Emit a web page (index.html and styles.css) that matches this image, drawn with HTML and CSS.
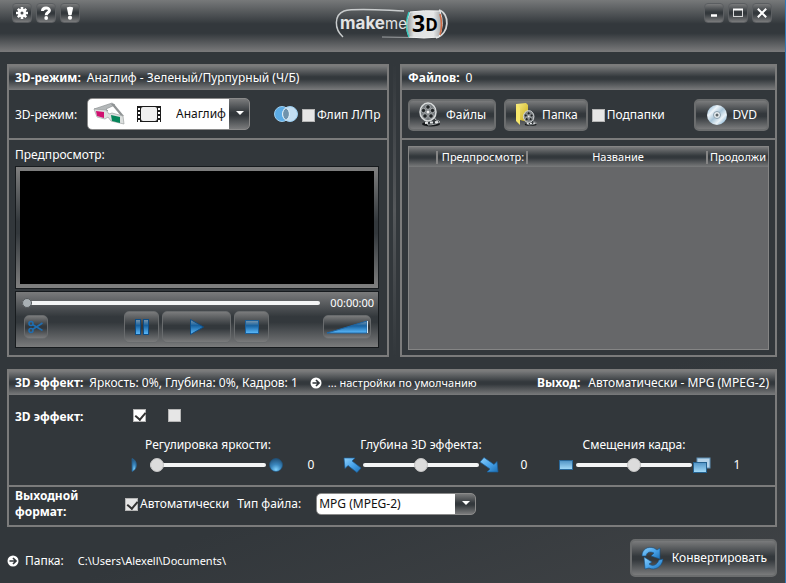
FILE: index.html
```html
<!DOCTYPE html>
<html lang="ru">
<head>
<meta charset="utf-8">
<meta name="viewport" content="width=device-width, initial-scale=1">
<title>makeme3D</title>
<link rel="stylesheet" href="styles.css">
</head>
<body>
<svg class="defs" aria-hidden="true">
  <defs>
    <linearGradient id="blue" x1="0" y1="0" x2="0" y2="1"><stop offset="0" stop-color="#7d99ae"/><stop offset=".4" stop-color="#17619f"/><stop offset="1" stop-color="#5cbcff"/></linearGradient>
    <linearGradient id="sky" x1="0" y1="0" x2="1" y2="1"><stop offset="0" stop-color="#8fd0fa"/><stop offset=".5" stop-color="#4aa5ec"/><stop offset="1" stop-color="#1d6fb4"/></linearGradient>
    <linearGradient id="frame" x1="0" y1="0" x2="0" y2="1"><stop offset="0" stop-color="#4f92c4"/><stop offset="1" stop-color="#a5dcfa"/></linearGradient>
    <radialGradient id="orb" cx=".5" cy=".85" r=".8"><stop offset="0" stop-color="#7fd0fb"/><stop offset=".5" stop-color="#3a86bd"/><stop offset="1" stop-color="#24567e"/></radialGradient>
    <linearGradient id="disc" x1="0" y1="0" x2="1" y2="1"><stop offset="0" stop-color="#6fa4c8"/><stop offset=".3" stop-color="#eef5fa"/><stop offset=".5" stop-color="#a9c5d8"/><stop offset=".7" stop-color="#eaf2f7"/><stop offset="1" stop-color="#5b9ac6"/></linearGradient>
    <linearGradient id="folder" x1="0" y1="0" x2="1" y2="1"><stop offset="0" stop-color="#fbf08a"/><stop offset="1" stop-color="#c7a915"/></linearGradient>
    <linearGradient id="badge" x1="0" y1="0" x2="1" y2="0"><stop offset="0" stop-color="#8b9092"/><stop offset=".2" stop-color="#dfe1e1"/><stop offset=".75" stop-color="#e6e7e7"/><stop offset="1" stop-color="#9a9d9e"/></linearGradient>
    <symbol id="reel" viewBox="0 0 24 26">
      <ellipse cx="13" cy="22" rx="9" ry="2.500" fill="#15181a"/>
      <path d="M15 5c4 3 1 9 2 12 1 2 4 1 5 3-3 2-8 3-12 3l-2-4z" fill="#33383b" stroke="#a8acae"/>
      <path d="M7 21l13-1" stroke="#e4e6e7" stroke-width="2" stroke-dasharray="3 2"/>
      <ellipse cx="10" cy="10" rx="8" ry="9" fill="#777c7f" stroke="#d8dbdc" stroke-width="1.500"/>
      <g fill="#202426" stroke="#b9bdbf" stroke-width=".8"><circle cx="10" cy="5" r="2.300"/><circle cx="5.500" cy="8.500" r="2.200"/><circle cx="14.500" cy="8.500" r="2.200"/><circle cx="7" cy="14" r="2.300"/><circle cx="13" cy="14" r="2.300"/></g>
      <circle cx="10" cy="10" r="1.500" fill="#eee"/>
    </symbol>
    <symbol id="go" viewBox="0 0 12 12"><circle cx="6" cy="6" r="5.500" fill="#fff"/><path d="M2.500 6h6M6 3l3 3-3 3" fill="none" stroke="#33383c" stroke-width="1.700"/></symbol>
    <symbol id="arrow" viewBox="0 0 20 16"><path d="M1 1l11 0-3 3 9 7-4 4.500-9-7-3 3z" fill="url(#sky)" stroke="#1b5f99" stroke-width=".7"/></symbol>
  </defs>
</svg>

<div class="window">
  <header class="titlebar">
    <div class="tools">
      <button class="mini" aria-label="Настройки"><svg width="14" height="14" viewBox="0 0 14 14"><g stroke="#fff" stroke-width="2.600"><path d="M7 1v12M1 7h12M2.800 2.800l8.400 8.400M11.200 2.800l-8.400 8.400"/></g><circle cx="7" cy="7" r="4.200" fill="#fff"/><circle cx="7" cy="7" r="1.500" fill="#4b4f52"/></svg></button>
      <button class="mini" aria-label="Справка"><svg width="14" height="14" viewBox="0 0 14 14"><path d="M3.500 5C3.500 .8 10.700 1 10.400 4.700 10.200 6.700 7.200 6.600 7.200 9.200" fill="none" stroke="#fff" stroke-width="3"/><circle cx="7.200" cy="12" r="1.900" fill="#fff"/></svg></button>
      <button class="mini" aria-label="О программе"><svg width="14" height="14" viewBox="0 0 14 14"><path d="M3.800 1.500Q7 -.2 10.200 1.500L8.600 9H5.400z" fill="#fff"/><circle cx="7" cy="11.700" r="2.100" fill="#fff"/></svg></button>
    </div>
    <svg class="logo" width="116" height="36" viewBox="0 0 116 36" role="img" aria-label="makeme3D">
      <path d="M70 5C45 4 20 2 10 5 0 9 0 23 9 31" fill="none" stroke="#c9cccd" stroke-width="1.500"/>
      <path d="M48 31l32 .5" stroke="#9fa2a4"/>
      <path d="M105 4c11 3 11 24-3 28" fill="none" stroke="#d4d6d7" stroke-width="1.800"/>
      <path d="M76 6q14-2 30-1 5 14-1 26-15 2-30 0-5-12 1-25z" fill="url(#badge)" stroke="#f2f3f3"/>
      <path d="M75 6q-5 13 0 25" fill="none" stroke="#35c8bd" stroke-width="1.500"/>
      <path d="M106 8q3 11 0 21" fill="none" stroke="#cf6b45" stroke-width="1.600"/>
      <text class="logo-make" x="6" y="23">make</text>
      <text class="logo-me" x="51" y="23">me</text>
      <text class="logo-3" x="78" y="26">3<tspan class="logo-d" dy="-1">D</tspan></text>
    </svg>
    <div class="tools end">
      <button class="mini" aria-label="Свернуть"><svg width="14" height="14" viewBox="0 0 14 14"><path d="M4 9.500h6" stroke="#fff" stroke-width="2.500"/></svg></button>
      <button class="mini" aria-label="Развернуть"><svg width="14" height="14" viewBox="0 0 14 14"><rect x="2.500" y="3.500" width="9" height="7" fill="none" stroke="#d5d6d7"/><path d="M2 3.500h10" stroke="#fff" stroke-width="2"/></svg></button>
      <button class="mini" aria-label="Закрыть"><svg width="14" height="14" viewBox="0 0 14 14"><path d="M2.800 2.800l8.400 8.400M11.200 2.800l-8.400 8.400" stroke="#fff" stroke-width="2"/></svg></button>
    </div>
  </header>

  <main class="content">
    <div class="top">
      <section class="panel">
        <h2 class="bar"><b>3D-режим:</b> <span>Анаглиф - Зеленый/Пурпурный (Ч/Б)</span></h2>
        <div class="mode">
          <label class="mode-label" for="mode">3D-режим:</label>
          <div class="combo combo-mode">
            <svg class="glasses" width="34" height="24" viewBox="0 0 34 24">
              <path d="M2 7L20 1l3 2-9 4 2 2z" fill="#b4b8b9" stroke="#85898b" stroke-width=".6"/>
              <path d="M19 2l3 0 10 12-3 0z" fill="#8f9394"/>
              <path d="M2 7l12 1 3 4 3-1 11 3 1 8-13-3-3-4-3 2-8-2z" fill="#dcdfde" stroke="#9fa3a4" stroke-width=".7"/>
              <path d="M4 9l8 1v6l-7-2z" fill="#d0106f"/><path d="M19 13l9 2v6l-8-2z" fill="#06855a"/>
            </svg>
            <svg class="film" width="24" height="16" viewBox="0 0 24 16"><rect width="24" height="16" fill="#1c1c1c"/><rect x="4" y="1" width="16" height="14" rx="2" fill="#f0f0f0"/><path d="M2 2v14M22 2v14" stroke="#fff" stroke-width="2" stroke-dasharray="2 2"/></svg>
            <select id="mode"><option>Анаглиф - Зеленый/Пурпурный (Ч/Б)</option></select>
          </div>
          <svg class="flip" width="24" height="18" viewBox="0 0 24 18"><circle cx="8" cy="9" r="7.500" fill="#5babe5" stroke="#9ccef0"/><circle cx="16" cy="9" r="7.500" fill="#c3def2" stroke="#9ccef0"/><path d="M12 2.700a7.500 7.500 0 0 1 0 12.600 7.500 7.500 0 0 1 0-12.600z" fill="#6f93ad" stroke="#e6f3fb"/></svg>
          <label class="check"><input type="checkbox">Флип Л/Пр</label>
        </div>
        <div class="preview">
          <h3>Предпросмотр:</h3>
          <div class="video"><div class="screen"></div></div>
          <div class="player">
            <div class="seek"><input type="range" class="seekbar" min="0" max="100" value="0" aria-label="Позиция"><output>00:00:00</output></div>
            <div class="controls">
              <button class="small" aria-label="Вырезать"><svg width="18" height="14" viewBox="0 0 18 14"><g fill="none" stroke="#1f6db0" stroke-width="1.600"><circle cx="4" cy="3.500" r="2"/><circle cx="4" cy="10.500" r="2"/><path d="M5.500 4.500l10 6M5.500 9.500l10-6.500"/></g></svg></button>
              <div class="transport">
                <button class="key" aria-label="Пауза"><svg width="16" height="18" viewBox="0 0 16 18"><g fill="url(#blue)" stroke="#0e4d85"><rect x="1.500" y="1.500" width="5" height="15"/><rect x="9.500" y="1.500" width="5" height="15"/></g></svg></button>
                <button class="key wide" aria-label="Воспроизвести"><svg width="16" height="18" viewBox="0 0 16 18"><path d="M1.500 1.500L14.500 9l-13 7.500z" fill="url(#blue)" stroke="#0e4d85"/></svg></button>
                <button class="key" aria-label="Стоп"><svg width="16" height="16" viewBox="0 0 16 16"><rect x="1.500" y="1.500" width="13" height="13" fill="url(#blue)" stroke="#1c5f99"/></svg></button>
              </div>
              <button class="small volume" aria-label="Громкость"><svg width="42" height="14" viewBox="0 0 42 14"><path d="M1 13L41 1v12z" fill="url(#blue)" stroke="#1d66a5"/><path d="M41.500 1v12" stroke="#cfe4f3"/></svg></button>
            </div>
          </div>
        </div>
      </section>

      <div class="splitter"></div>

      <section class="panel">
        <h2 class="bar"><b>Файлов:</b> <span>0</span></h2>
        <div class="files">
          <button class="btn"><svg width="24" height="26"><use href="#reel"/></svg>Файлы</button>
          <button class="btn folder"><svg width="24" height="26" viewBox="0 0 24 26"><path d="M2 2l10-1 2 2v17l-12-3z" fill="url(#folder)"/><path d="M2 2l4 4v17l-4-4z" fill="#f7e76b"/><svg x="8" y="8" width="16" height="17"><use href="#reel"/></svg></svg>Папка</button>
          <label class="check"><input type="checkbox">Подпапки</label>
          <button class="btn dvd"><svg width="22" height="22" viewBox="0 0 22 22"><circle cx="11" cy="11" r="10" fill="url(#disc)"/><circle cx="11" cy="11" r="3.500" fill="#e9eef1" stroke="#8ba0ae"/><circle cx="11" cy="11" r="1.500" fill="#5b6469"/></svg>DVD</button>
        </div>
        <div class="list">
          <table>
            <thead><tr><th class="c-num"></th><th class="c-prev">Предпросмотр:</th><th class="c-name">Название</th><th class="c-len">Продолжи</th></tr></thead>
            <tbody></tbody>
          </table>
        </div>
      </section>
    </div>

    <section class="panel">
      <h2 class="bar"><b>3D эффект:</b> <span>Яркость: 0%, Глубина: 0%, Кадров: 1</span>
        <a class="defaults" href="#"><svg width="12" height="12"><use href="#go"/></svg>... настройки по умолчанию</a>
        <span class="out"><b>Выход:</b> <span>Автоматически - MPG (MPEG-2)</span></span></h2>
      <div class="effect">
        <h3>3D эффект:</h3>
        <div class="effect-body">
          <div class="toggles"><input type="checkbox" checked aria-label="Эффект включен"><input type="checkbox" aria-label="Дополнительно"></div>
          <div class="sliders">
            <div class="slider">
              <label for="bright">Регулировка яркости:</label>
              <svg width="20" height="16" viewBox="0 0 20 16"><path d="M2 1.500a7 7 0 0 1 0 13z" fill="url(#orb)" stroke="#2a6ca0" stroke-width=".6"/></svg>
              <input id="bright" type="range" min="0" max="100" value="0">
              <svg width="20" height="16" viewBox="0 0 20 16"><circle cx="10" cy="8" r="6.500" fill="url(#orb)" stroke="#1d5685" stroke-width=".6"/></svg>
              <output for="bright">0</output>
            </div>
            <div class="slider">
              <label for="depth">Глубина 3D эффекта:</label>
              <svg width="20" height="16"><use href="#arrow"/></svg>
              <input id="depth" type="range" min="-50" max="50" value="0">
              <svg width="20" height="16" viewBox="0 0 20 16"><path d="M19 15H8l3-3-10-7 4-4.500 10 7 3-3z" fill="url(#sky)" stroke="#1b5f99" stroke-width=".7"/></svg>
              <output for="depth">0</output>
            </div>
            <div class="slider">
              <label for="shift">Смещения кадра:</label>
              <svg width="20" height="16" viewBox="0 0 20 16"><rect x="3.500" y="3.500" width="13" height="9" fill="url(#frame)" stroke="#2a6899"/></svg>
              <input id="shift" type="range" min="-1" max="3" value="1">
              <svg width="20" height="16" viewBox="0 0 20 16"><rect x="5" y="1" width="13" height="10" fill="#b5d3e9" stroke="#5c8fb5"/><rect x="1.500" y="5.500" width="13" height="10" fill="url(#frame)" stroke="#24618f"/></svg>
              <output for="shift">1</output>
            </div>
          </div>
        </div>
      </div>
      <div class="format">
        <h3>Выходной формат:</h3>
        <label class="check"><input type="checkbox" checked>Автоматически</label>
        <label for="type" class="type">Тип файла:</label>
        <div class="combo combo-type"><select id="type"><option>MPG (MPEG-2)</option></select></div>
      </div>
    </section>
  </main>

  <footer class="footer">
    <a class="folder-link" href="#"><svg width="12" height="12"><use href="#go"/></svg>Папка:</a>
    <span class="path">C:\Users\Alexell\Documents\</span>
    <button class="btn convert"><svg width="24" height="26" viewBox="0 0 24 26"><path d="M2 11C2 4 8 1 14 3l3 2 3-2v11l-9-3 3-3C10 6 7 7 6 11z" fill="url(#sky)" stroke="#164f80" stroke-width=".6"/><path d="M4 12l8 5-3 2c4 3 8 1 10-4l4-1c-1 8-8 12-14 9l-4 1z" fill="url(#sky)" stroke="#164f80" stroke-width=".6"/></svg>Конвертировать</button>
  </footer>
</div>
</body>
</html>
```
FILE: styles.css
```css
:root {
  --dark: #32373b;
  --line: #7b7b7b;
  --metal: linear-gradient(#7a7b7c, #33383c 45%, #33383c 55%, #7a7b7c);
}

* { box-sizing: border-box; }

body {
  margin: 0;
  color: #fff;
  font: 12px/16px "Noto Sans", "Open Sans", sans-serif;
}

button, input, select { font: inherit; color: inherit; margin: 0; }
h2, h3 { margin: 0; font: inherit; }
a { color: inherit; text-decoration: none; }
svg { display: block; flex: none; }
.defs { position: absolute; width: 0; height: 0; }

.window {
  display: flex;
  flex-direction: column;
  min-height: 100vh;
  border-right: 1px solid #2f79b5;
  background: linear-gradient(160deg, var(--dark) 70%, #404346);
}

/* Title bar */
.titlebar {
  display: grid;
  grid-template-columns: 1fr auto 1fr;
  align-items: start;
  height: 52px;
  padding: 3px 13px 0 12px;
  background: linear-gradient(#77797a, #33383c 46%, #33383c 64%, #7b7b7c);
}
.tools { display: flex; gap: 4px; }
.tools.end { justify-content: flex-end; }
.mini {
  display: grid;
  place-items: center;
  width: 20px;
  height: 20px;
  padding: 0;
  border: 1px solid #5b5e61;
  border-radius: 4px;
  background: var(--metal);
}
.logo { margin-top: 3px; }
.logo-make, .logo-me { font: bold 17px Inter, sans-serif; fill: #e2e3e4; }
.logo-me { font-size: 15px; font-weight: 400; }
.logo-3 { font: bold 23px "Open Sans", sans-serif; fill: #000; }
.logo-d { font-size: 17px; }

/* Panels */
.content {
  display: flex;
  flex-direction: column;
  gap: 12px;
  padding: 12px 8px 0 7px;
}
.top { display: grid; grid-template-columns: minmax(0, 382fr) 11px minmax(0, 377fr); }
.panel {
  display: flex;
  flex-direction: column;
  min-width: 0;
  border: 2px solid var(--line);
  background: var(--dark);
}
.splitter {
  justify-self: center;
  width: 3px;
  background: linear-gradient(var(--dark), #55585b 50%, var(--dark));
}
.bar {
  display: flex;
  align-items: center;
  gap: 6px;
  height: 24px;
  padding: 0 6px;
  background: var(--metal);
  white-space: nowrap;
}

/* Checkboxes */
input[type="checkbox"] {
  appearance: none;
  flex: none;
  width: 13px;
  height: 13px;
  border: 1px solid #b5b5b5;
  background: #e6e6e6;
}
input[type="checkbox"]:checked::after {
  content: "";
  display: block;
  width: 5px;
  height: 8px;
  margin: 0 0 0 3px;
  border: solid #333;
  border-width: 0 2px 2px 0;
  transform: rotate(40deg);
}
.check { display: flex; align-items: center; gap: 2px; white-space: nowrap; }

/* Drop-downs */
.combo {
  position: relative;
  display: flex;
  flex: none;
  align-items: center;
  border: 1px solid #8a8a8a;
  border-radius: 5px;
  background: linear-gradient(#fff, #fff) left / calc(100% - 20px) 100% no-repeat, var(--metal);
  color: #111;
}
.combo::after {
  content: "";
  position: absolute;
  right: 5px;
  top: 50%;
  margin-top: -3px;
  border: 4px solid transparent;
  border-top-color: #fff;
  border-bottom: 0;
  pointer-events: none;
}
.combo select {
  appearance: none;
  flex: 1;
  min-width: 0;
  height: 100%;
  padding: 0 22px 0 2px;
  border: 0;
  background: none;
}

/* 3D mode */
.mode {
  display: flex;
  align-items: center;
  height: 50px;
  padding: 0 6px;
  border-bottom: 2px solid var(--line);
  white-space: nowrap;
}
.mode-label { width: 72px; }
.mode label { padding-top: 2px; }
.combo-mode { width: 163px; height: 32px; padding-left: 4px; }
.film { margin: 0 13px 0 11px; }
.flip { margin: 0 4px 0 24px; }

.preview { padding: 7px 8px 7px 6px; }
.video {
  margin: 3px 0 2px;
  padding: 4px;
  border: 1px solid #171b1e;
  background: linear-gradient(#808080, #33383c 45%, #33383c 55%, #808080);
}
.screen { height: 113px; background: #000; }
.player {
  padding: 3px 7px 4px 6px;
  border: 1px solid #171b1e;
  background: var(--metal);
}
.seek { display: flex; align-items: center; gap: 10px; margin-right: -3px; font-size: 11px; }
.seek input { flex: 1; }
.controls { display: grid; grid-template-columns: 1fr auto 1fr; align-items: center; }
.transport { display: flex; gap: 3px; }
.small, .key {
  display: grid;
  place-items: center;
  padding: 0;
  border: 1px solid #686b6d;
  border-radius: 5px;
  background: var(--metal);
}
.small { width: 24px; height: 24px; margin-left: 2px; }
.volume { width: 48px; margin: 0 0 0 auto; }
.key { width: 35px; height: 32px; }
.wide { width: 69px; }

/* Range inputs */
input[type="range"] { appearance: none; min-width: 0; height: 14px; background: none; }
input[type="range"]::-webkit-slider-runnable-track {
  height: 4px;
  border-radius: 2px;
  background: #f4f5f5;
}
input[type="range"]::-webkit-slider-thumb {
  appearance: none;
  width: 14px;
  height: 14px;
  margin-top: -5px;
  border: 1px solid #c4c4c4;
  border-radius: 50%;
  background: #dcdcdc;
}
input.seekbar::-webkit-slider-thumb {
  width: 10px;
  height: 10px;
  margin-top: -3px;
  border-color: #54585b;
  background: #a9b0b4;
}

/* Files */
.files {
  display: flex;
  align-items: center;
  height: 50px;
  padding: 2px 6px 0;
  border-bottom: 2px solid var(--line);
}
.btn {
  display: flex;
  align-items: center;
  gap: 4px;
  height: 32px;
  padding: 0 8px;
  border: 2px solid #6b6d6e;
  border-radius: 5px;
  background: var(--metal);
  white-space: nowrap;
}
.folder { margin: 0 4px 0 8px; }
.dvd { padding: 0 10px; margin-left: auto; }
.list {
  flex: 1;
  margin: 6px 6px 5px;
  border: 1px solid #858585;
  background: #666769;
  overflow: hidden;
}
table { width: 100%; border-collapse: collapse; table-layout: fixed; }
thead { background: var(--metal); }
th {
  height: 20px;
  padding: 0 2px;
  background: linear-gradient(#858585, #858585) right / 2px 13px no-repeat;
  font-size: 11px;
  font-weight: 400;
  text-align: center;
  white-space: nowrap;
}
.c-num { width: 29px; }
.c-prev { width: 90px; }
.c-name { width: 180px; }
.c-len { background: none; padding-right: 0; text-align: left; }

/* Effect settings */
.defaults { display: flex; align-items: center; gap: 6px; margin-left: 6px; font-size: 11px; }
.out { display: flex; gap: 8px; margin-left: auto; }
.effect {
  display: grid;
  grid-template-columns: 115px 1fr;
  height: 92px;
  padding: 14px 6px 0 6px;
  border-bottom: 2px solid var(--line);
}
.effect h3, .format h3 { font-weight: 700; }
.toggles { display: flex; gap: 22px; height: 28px; padding-left: 3px; }
.toggles input:checked { background: #fff; }
.sliders { display: grid; grid-template-columns: repeat(3, 1fr); }
.slider { display: grid; grid-template-columns: 20px 116px 20px 50px; align-items: center; row-gap: 4px; }
.slider label { grid-column: 1 / -1; padding-right: 50px; text-align: center; white-space: nowrap; }
.slider output { text-align: center; }
.format {
  display: flex;
  align-items: center;
  height: 38px;
  padding: 0 0 4px 6px;
}
.format h3 { width: 110px; padding-right: 40px; }
.type { margin: 0 15px 0 8px; }
.combo-type { width: 160px; height: 22px; }

/* Footer */
.footer { display: flex; align-items: center; padding: 12px 8px 7px 7px; }
.folder-link { display: flex; align-items: center; gap: 6px; }
.folder-link, .path { padding-top: 6px; }
.path { margin-left: 14px; font-size: 11px; }
.convert { height: 38px; gap: 8px; padding: 0 8px; margin-left: auto; }
```
